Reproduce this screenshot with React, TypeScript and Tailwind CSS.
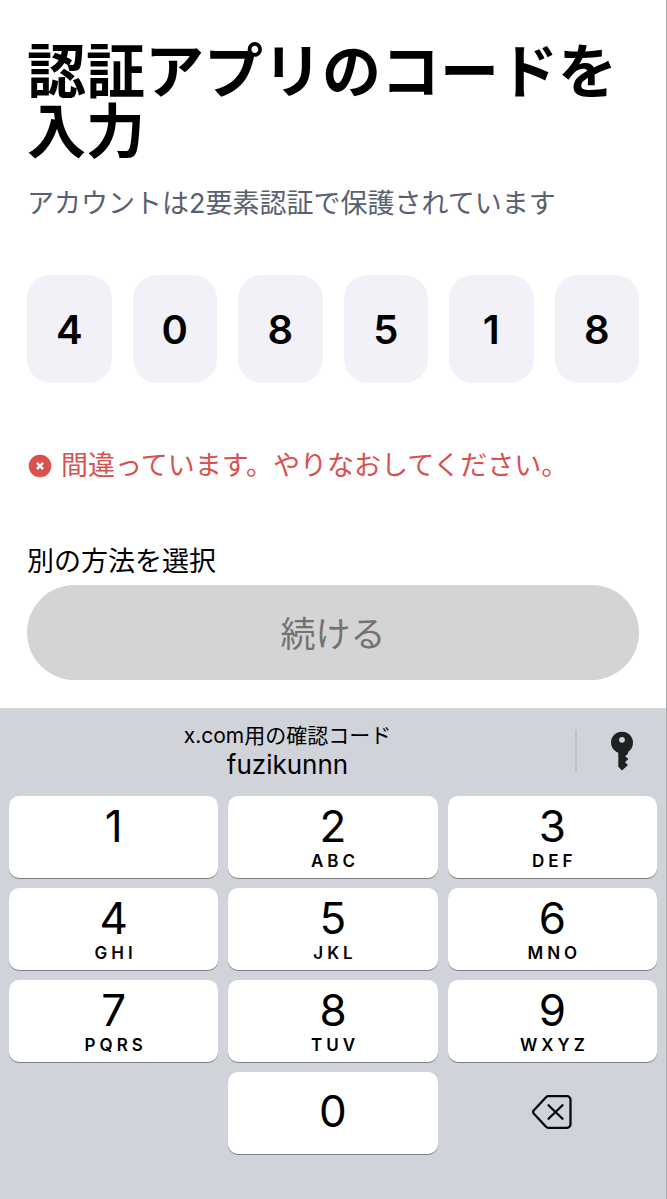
import { useState } from "react";

const KEYS = [
  { digit: "1", letters: "" },
  { digit: "2", letters: "ABC" },
  { digit: "3", letters: "DEF" },
  { digit: "4", letters: "GHI" },
  { digit: "5", letters: "JKL" },
  { digit: "6", letters: "MNO" },
  { digit: "7", letters: "PQRS" },
  { digit: "8", letters: "TUV" },
  { digit: "9", letters: "WXYZ" },
];

const KEY_CLASS =
  "flex h-[82px] flex-col items-center rounded-[10px] bg-white shadow-[0_1px_0_#7f8083] active:bg-gray-200";

const ErrorIcon = () => (
  <svg viewBox="0 0 24 24" className="size-6 shrink-0" aria-hidden="true">
    <circle cx="12" cy="12" r="11.3" fill="#d9504f" />
    <path d="M8.9 8.9l6.2 6.2M15.1 8.9l-6.2 6.2" stroke="#fff" strokeWidth="2.3" />
  </svg>
);

const KeyIcon = () => (
  <svg viewBox="0 0 24 40" className="h-10 w-6" aria-hidden="true">
    <path
      fill="#1f2022"
      fillRule="evenodd"
      d="M12 .8C5.9.8 1 5.5 1 11.5c0 4.600 2.900 8.600 7.300 10.200v14.100l3.700 3.600 6-5.300-3-2.800 3.400-3.200-3.200-2.900 2.900-2.700v-1.500C20.900 19.200 23 15.700 23 11.500 23 5.500 18.100.8 12 .8zm0 5.100a2.900 2.900 0 1 1 0 5.800 2.900 2.900 0 0 1 0-5.800z"
    />
  </svg>
);

const BackspaceIcon = () => (
  <svg
    viewBox="0 0 40 34"
    className="h-[34px] w-10"
    fill="none"
    stroke="#08080a"
    strokeWidth="2.3"
    strokeLinecap="round"
    strokeLinejoin="round"
    aria-hidden="true"
  >
    <path d="M16.500 1.200H35a3.500 3.500 0 0 1 3.500 3.500v24.600a3.500 3.500 0 0 1-3.500 3.500H16.500c-1 0-1.800-.4-2.500-1.100L1.900 18.800a2.500 2.500 0 0 1 0-3.600L14 2.300c.7-.7 1.500-1.100 2.500-1.100z" />
    <path d="M16.500 10.200l14 13.600M30.500 10.200l-14 13.600" />
  </svg>
);

const App = () => {
  const [code, setCode] = useState("408518");

  const press = (digit: string) => setCode((c) => (c + digit).slice(0, 6));

  return (
    <div className="flex min-h-screen flex-col border-r border-[#a9aaad] bg-white font-['Inter','Noto_Sans_CJK_JP',sans-serif] text-black">
      <main className="px-[27px] pt-[42px] pb-7">
        <h1 className="text-[59px] leading-[60px] font-bold">
          認証アプリのコードを入力
        </h1>
        <p className="mt-6 text-[27px] leading-9 text-[#596070]">
          アカウントは2要素認証で保護されています
        </p>

        {/* One box per digit */}
        <div className="mt-[53px] grid grid-cols-6 gap-[21px]">
          {[0, 1, 2, 3, 4, 5].map((i) => (
            <input
              key={i}
              aria-label={`確認コード ${i + 1}桁目`}
              inputMode="numeric"
              maxLength={1}
              value={code[i] ?? ""}
              onChange={(e) =>
                setCode(code.slice(0, i) + e.target.value + code.slice(i + 1))
              }
              className="h-[108px] w-full min-w-0 rounded-3xl bg-[#f2f1f7] text-center text-[40px] font-semibold outline-none"
            />
          ))}
        </div>

        <p
          role="alert"
          className="mt-[65px] flex items-center gap-[9px] pl-px text-[27px] leading-9 text-[#d9504f]"
        >
          <ErrorIcon />
          間違っています。やりなおしてください。
        </p>

        <a href="#methods" className="mt-[60px] block w-fit text-[27px] leading-9">
          別の方法を選択
        </a>
        <button
          type="button"
          className="mt-[5px] h-[95px] w-full rounded-full bg-[#d4d4d4] pt-1 text-[35px] text-[#757170]"
        >
          続ける
        </button>
      </main>

      <section className="flex-1 bg-[#d0d3d9]" aria-label="キーボード">
        <div className="flex h-[88px] items-center">
          <button
            type="button"
            onClick={() => setCode("408518")}
            className="flex-1 pb-0.5 text-center"
          >
            <span className="block text-[21px] leading-7">x.com用の確認コード</span>
            <span className="block text-[26px] leading-[30px]">fuzikunnn</span>
          </button>
          <div className="mb-0.5 h-[42px] w-0.5 bg-[#bfc1c6]" />
          <button
            type="button"
            aria-label="パスワード"
            className="flex w-[89px] justify-center pb-0.5"
          >
            <KeyIcon />
          </button>
        </div>

        <div className="grid grid-cols-3 gap-2.5 px-[9px]">
          {KEYS.map(({ digit, letters }) => (
            <button
              key={digit}
              type="button"
              onClick={() => press(digit)}
              className={KEY_CLASS}
            >
              <span className="pt-1.5 text-[44px] leading-[48px]">{digit}</span>
              <span className="pl-1 text-[17px] leading-[22px] font-semibold tracking-[4px]">
                {letters}
              </span>
            </button>
          ))}
          <button
            type="button"
            onClick={() => press("0")}
            className={`${KEY_CLASS} col-start-2 justify-center pb-1`}
          >
            <span className="text-[44px] leading-[48px]">0</span>
          </button>
          <button
            type="button"
            aria-label="削除"
            onClick={() => setCode((c) => c.slice(0, -1))}
            className="flex items-center justify-center pb-0.5"
          >
            <BackspaceIcon />
          </button>
        </div>
      </section>
    </div>
  );
};

export default App;
